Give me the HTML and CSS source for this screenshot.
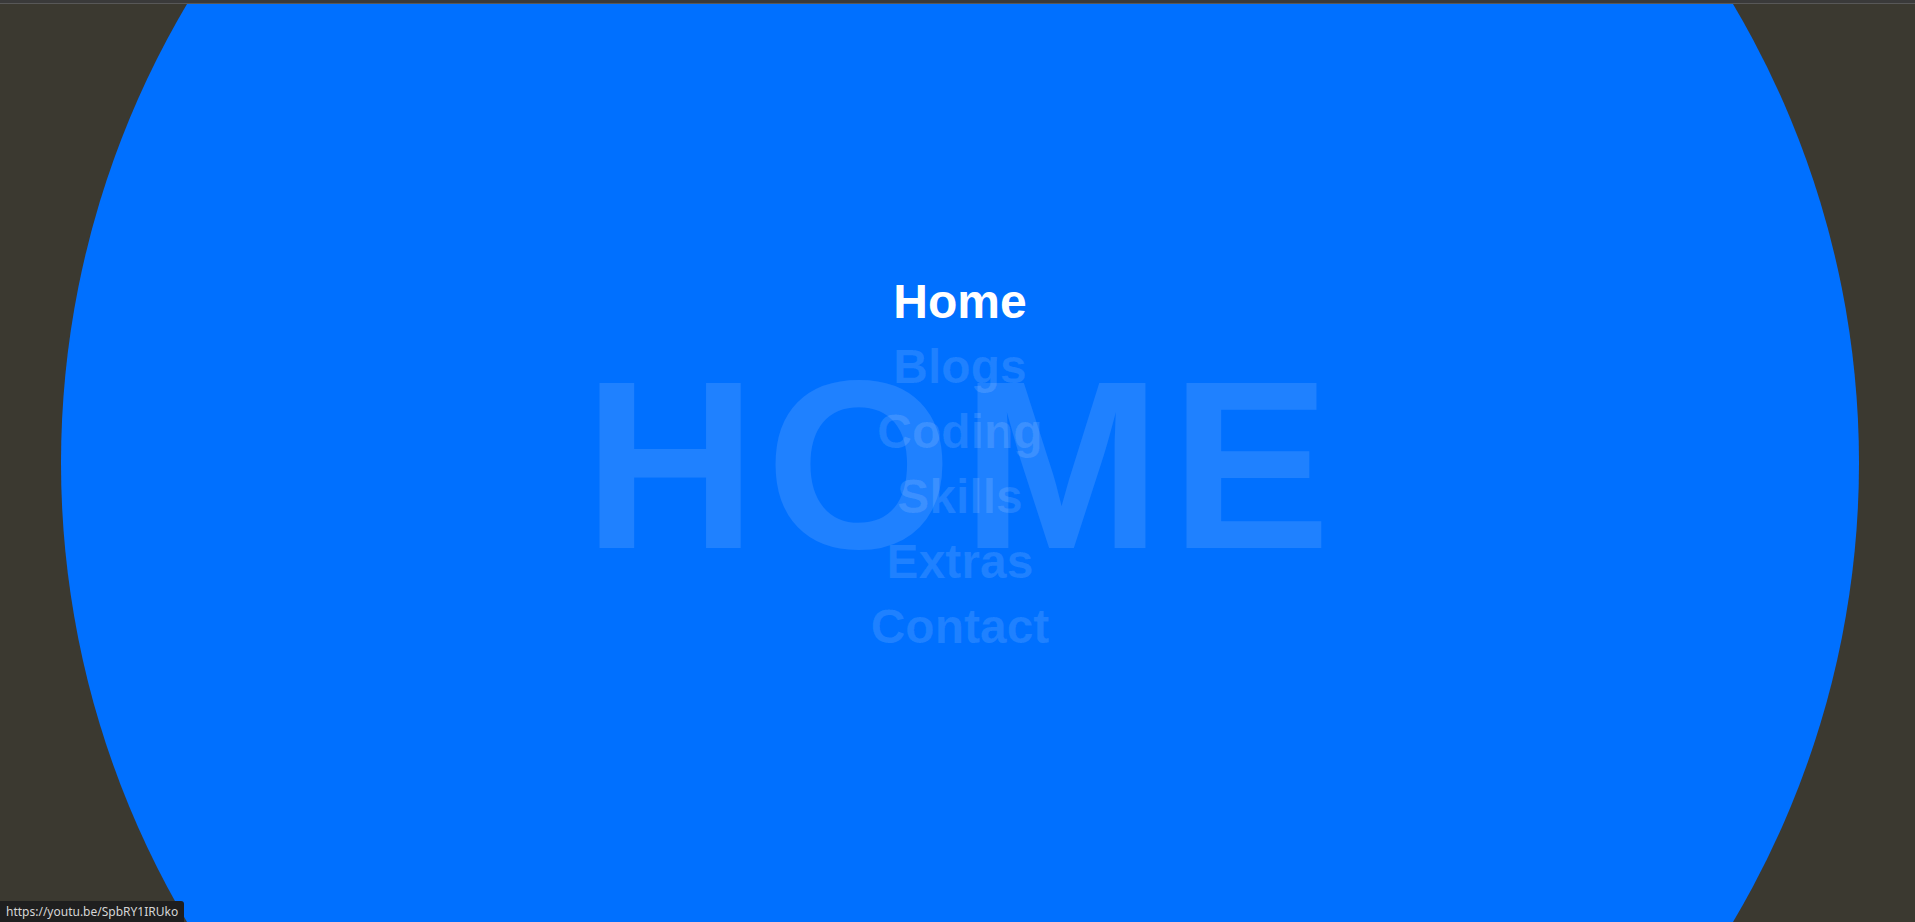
FILE: index.html
```html
<!DOCTYPE html>
<html lang="en">
<head>
<meta charset="utf-8">
<title>Home</title>
<link rel="stylesheet" href="styles.css">
</head>
<body>
<div class="topline"></div>
<main class="stage">
  <div class="circle">
    <div class="bigword">HOME</div>
    <nav class="menu">
      <a class="menu-item active" href="#">Home</a>
      <a class="menu-item" href="#">Blogs</a>
      <a class="menu-item" href="#">Coding</a>
      <a class="menu-item" href="#">Skills</a>
      <a class="menu-item" href="#">Extras</a>
      <a class="menu-item" href="#">Contact</a>
    </nav>
  </div>
</main>
<div class="status-tip">https://youtu.be/SpbRY1IRUko</div>
</body>
</html>
```
FILE: styles.css
```css
html, body {
  margin: 0;
  padding: 0;
  height: 100%;
  overflow: hidden;
  background: #3b3930;
}

.topline {
  height: 3px;
  background: #3a3a3a;
  border-bottom: 1px solid #585858;
}

.stage {
  width: 1920px;
  height: 918px;
  display: flex;
  justify-content: center;
  align-items: center;
  overflow: hidden;
}

.circle {
  flex: 0 0 1798px;
  width: 1798px;
  height: 1798px;
  border-radius: 50%;
  background: #0070ff;
  display: grid;
  place-items: center;
}

.bigword,
.menu {
  grid-area: 1 / 1;
}

.bigword {
  font-family: "Liberation Sans", Arial, sans-serif;
  font-weight: bold;
  font-size: 240px;
  line-height: 1;
  letter-spacing: 9px;
  padding-left: 3px;
  padding-top: 4px;
  color: rgba(255, 255, 255, 0.12);
  user-select: none;
}

.menu {
  display: flex;
  flex-direction: column;
  align-items: center;
  padding-top: 2px;
}

.menu-item {
  font-family: "Liberation Sans", Arial, sans-serif;
  font-weight: bold;
  font-size: 48px;
  line-height: 65px;
  color: rgba(255, 255, 255, 0.12);
  text-decoration: none;
}

.menu-item.active {
  color: #ffffff;
}

.status-tip {
  position: fixed;
  left: 0;
  bottom: 0;
  height: 21px;
  line-height: 21px;
  padding: 0 6px 0 6px;
  background: #1f1f1f;
  color: #d6d6d6;
  font-family: "Noto Sans", "Open Sans", sans-serif;
  font-size: 12px;
  border-top-right-radius: 3px;
}
```
